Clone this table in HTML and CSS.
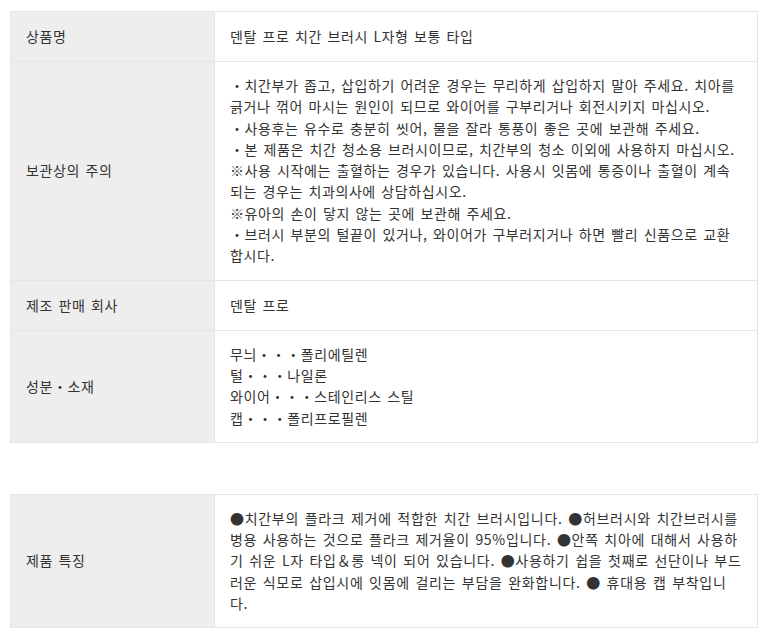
FILE: index.html
```html
<!DOCTYPE html>
<html lang="ko">
<head>
<meta charset="utf-8">
<link rel="stylesheet" href="styles.css">
</head>
<body>
<div class="page">
  <table class="spec">
    <tr class="row-single">
      <th>상품명</th>
      <td>덴탈 프로 치간 브러시 L자형 보통 타입</td>
    </tr>
    <tr>
      <th>보관상의 주의</th>
      <td>・치간부가 좁고, 삽입하기 어려운 경우는 무리하게 삽입하지 말아 주세요. 치아를 긁거나 꺾어 마시는 원인이 되므로 와이어를 구부리거나 회전시키지 마십시오.<br>・사용후는 유수로 충분히 씻어, 물을 잘라 통풍이 좋은 곳에 보관해 주세요.<br>・본 제품은 치간 청소용 브러시이므로, 치간부의 청소 이외에 사용하지 마십시오.<br>※사용 시작에는 출혈하는 경우가 있습니다. 사용시 잇몸에 통증이나 출혈이 계속되는 경우는 치과의사에 상담하십시오.<br>※유아의 손이 닿지 않는 곳에 보관해 주세요.<br>・브러시 부분의 털끝이 있거나, 와이어가 구부러지거나 하면 빨리 신품으로 교환합시다.</td>
    </tr>
    <tr class="row-single">
      <th>제조 판매 회사</th>
      <td>덴탈 프로</td>
    </tr>
    <tr>
      <th>성분・소재</th>
      <td>무늬・・・폴리에틸렌<br>털・・・나일론<br>와이어・・・스테인리스 스틸<br>캡・・・폴리프로필렌</td>
    </tr>
  </table>

  <table class="spec spec-second">
    <tr>
      <th>제품 특징</th>
      <td>●치간부의 플라크 제거에 적합한 치간 브러시입니다. ●허브러시와 치간브러시를 병용 사용하는 것으로 플라크 제거율이 95%입니다. ●안쪽 치아에 대해서 사용하기 쉬운 L자 타입＆롱 넥이 되어 있습니다. ●사용하기 쉽을 첫째로 선단이나 부드러운 식모로 삽입시에 잇몸에 걸리는 부담을 완화합니다. ● 휴대용 캡 부착입니다.</td>
    </tr>
  </table>
</div>
</body>
</html>
```

FILE: styles.css
```css
html, body {
  margin: 0;
  padding: 0;
  background: #ffffff;
}

.page {
  padding: 11px 13px 0 10px;
  font-family: "Noto Sans CJK KR", "Noto Sans", sans-serif;
  font-size: 14px;
  color: #333333;
}

.spec {
  width: 748px;
  border-collapse: collapse;
  table-layout: fixed;
}

.spec-second {
  margin-top: 51px;
}

.spec th,
.spec td {
  border: 1px solid #e5e5e5;
  padding: 13px 15px;
  line-height: 21.3px;
  text-align: left;
  vertical-align: middle;
  font-weight: normal;
  letter-spacing: 0.6px;
  word-spacing: 1px;
}

.spec-second td {
  letter-spacing: 0.7px;
}

.spec th {
  width: 173px;
  background: #eeeeee;
}

.spec td {
  background: #ffffff;
}

.row-single th,
.row-single td {
  height: 23px;
}
```
